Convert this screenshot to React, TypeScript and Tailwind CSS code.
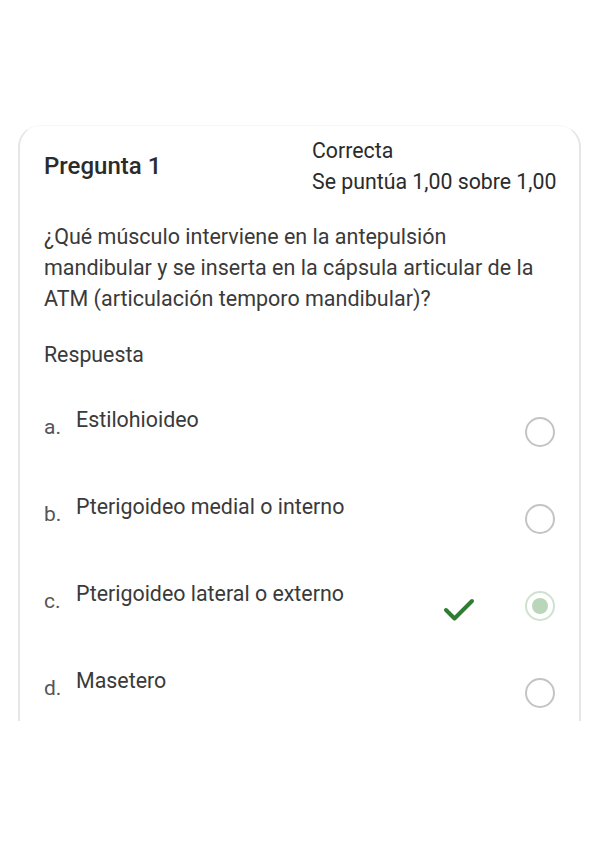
import React from "react";

const options = [
  { l: "a.", t: "Estilohioideo", sel: false, ok: false },
  { l: "b.", t: "Pterigoideo medial o interno", sel: false, ok: false },
  { l: "c.", t: "Pterigoideo lateral o externo", sel: true, ok: true },
  { l: "d.", t: "Masetero", sel: false, ok: false },
];

export default function App() {
  return (
    <div
      className="w-[599px] h-[848px] bg-white text-[#333333] overflow-hidden"
      style={{ fontFamily: "Roboto, 'Noto Sans', sans-serif" }}
    >
      <div className="h-[125px]" />
      <div className="ml-[18px] w-[563px] h-[596px] rounded-t-[22px] border-x-2 border-t border-x-[#e6e6e6] border-t-[#f7f7f7] pl-[24px] pr-[20px] pt-[9px]">
        <div className="flex items-center">
          <div className="w-[268px] text-[24px] leading-[30px] font-medium text-[#2b2b2b]">Pregunta 1</div>
          <div className="text-[21.3px] leading-[31px] text-[#2b2b2b]">
            <div>Correcta</div>
            <div>Se puntúa 1,00 sobre 1,00</div>
          </div>
        </div>
        <div className="mt-[24px] text-[21.5px] leading-[31px] text-[#3a3a3a]">
          ¿Qué músculo interviene en la antepulsión mandibular y se inserta en la cápsula articular de la ATM (articulación temporo mandibular)?
        </div>
        <div className="mt-[25px] text-[21.3px] leading-[31px] text-[#3a3a3a]">Respuesta</div>
        <div className="mt-[34px]">
          {options.map((o) => (
            <div key={o.l} className="flex h-[87px]">
              <span className="w-[32px] mt-[8px] text-[21px] leading-[31px] text-[#555555]">{o.l}</span>
              <span className="flex-1 text-[21.4px] leading-[31px] text-[#3a3a3a]">{o.t}</span>
              {o.ok && (
                <svg className="mt-[20px] mr-[50px]" width="32" height="24" viewBox="0 0 32 24">
                  <path d="M3 12 L11.5 20.5 L29 3" fill="none" stroke="#2e7d32" strokeWidth="4" strokeLinecap="round" strokeLinejoin="round" />
                </svg>
              )}
              {o.sel ? (
                <div className="mt-[13px] mr-[4px] w-[30px] h-[30px] rounded-full border-[2.5px] border-[#cfe2cf] flex items-center justify-center">
                  <div className="w-[16px] h-[16px] rounded-full bg-[#b9d6b9]" />
                </div>
              ) : (
                <div className="mt-[13px] mr-[4px] w-[30px] h-[30px] rounded-full border-[2.5px] border-[#c4c4c4]" />
              )}
            </div>
          ))}
        </div>
      </div>
    </div>
  );
}
